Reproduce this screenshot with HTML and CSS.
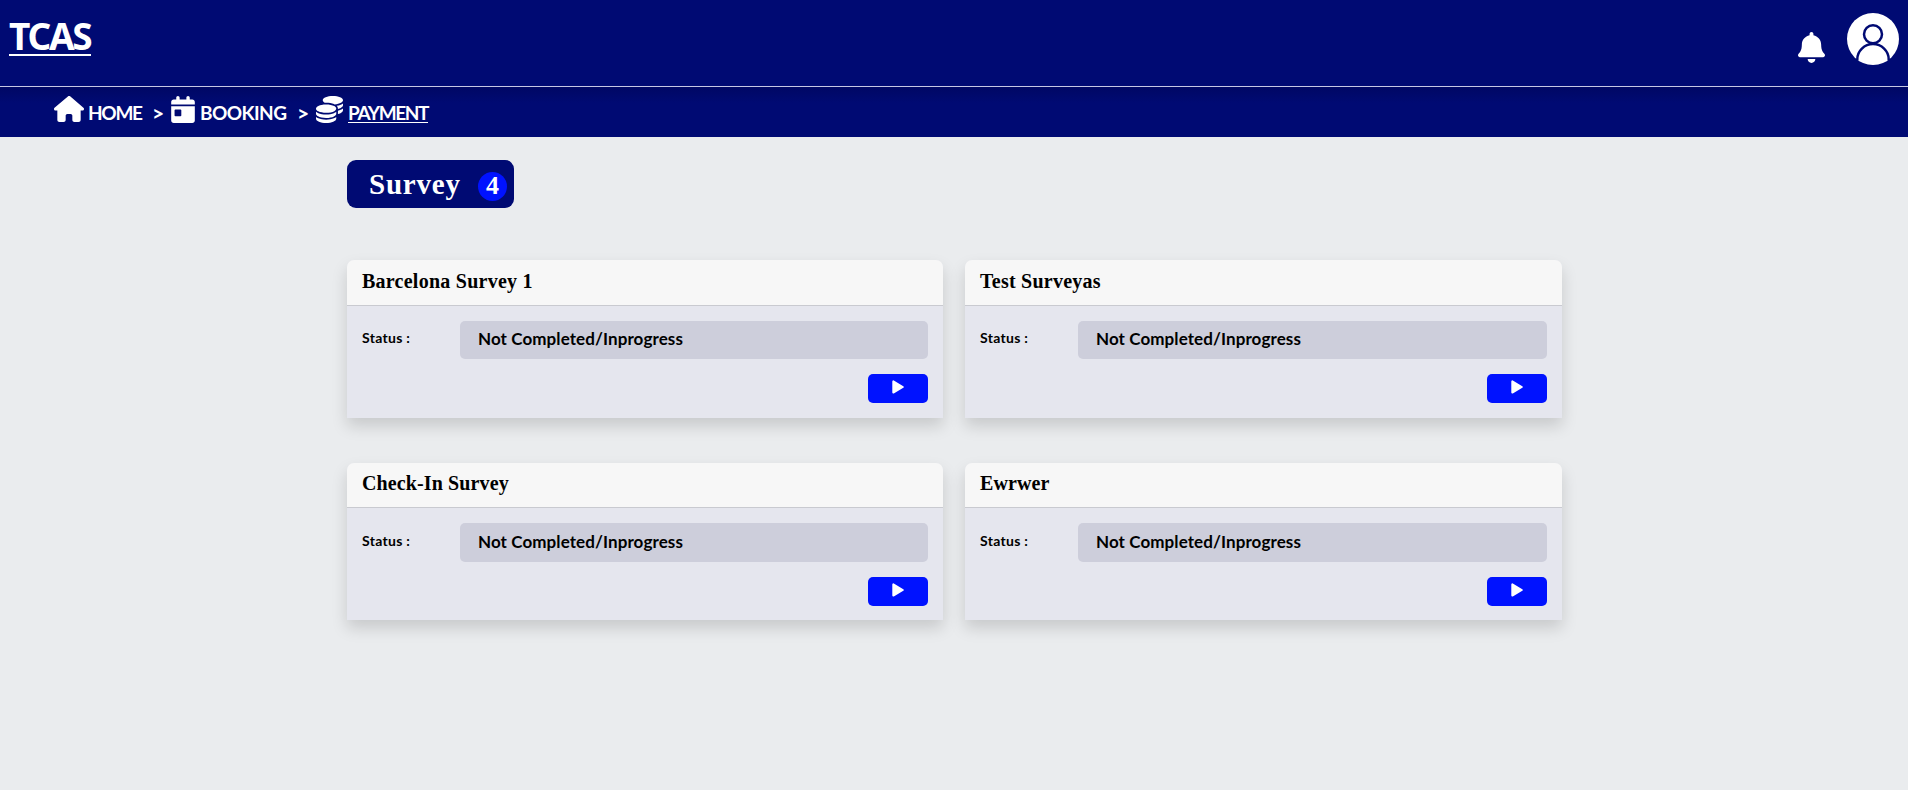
FILE: index.html
```html
<!DOCTYPE html>
<html lang="en">
<head>
<meta charset="utf-8">
<title>TCAS Survey</title>
<link rel="stylesheet" href="styles.css">
</head>
<body>
<svg width="0" height="0" class="defs"><defs>
<symbol id="play" viewBox="0 0 12 14"><path d="M1.3 1.4v11.2L10.8 7z" fill="#fff" stroke="#fff" stroke-width="2" stroke-linejoin="round"/></symbol>
</defs></svg>
<header class="top">
  <a class="logo">TCAS</a>
  <div class="tools">
    <svg class="bell" viewBox="0 0 448 512"><path d="M224 512c35.32 0 63.97-28.65 63.97-64H160.03c0 35.35 28.65 64 63.97 64zm215.39-149.71c-19.32-20.76-55.47-51.99-55.47-154.29 0-77.7-54.48-139.9-127.94-155.16V32c0-17.67-14.32-32-31.98-32s-31.98 14.33-31.98 32v20.84C118.56 68.1 64.08 130.3 64.08 208c0 102.3-36.15 133.53-55.47 154.29-6 6.45-8.66 14.16-8.61 21.71.11 16.4 12.98 32 32.1 32h383.8c19.12 0 32-15.6 32.1-32 .05-7.55-2.61-15.27-8.61-21.71z"/></svg>
    <svg class="avatar" viewBox="0 0 52 52"><circle cx="26" cy="26" r="26" fill="#fff"/><g fill="none" stroke="#000a73" stroke-width="2.5"><circle cx="26" cy="21.3" r="9"/><path d="M10.3 47.5V46.3a15.7 15.2 0 0 1 31.4 0V47.5"/></g></svg>
  </div>
</header>
<nav class="crumbs">
  <svg class="house" viewBox="0 0 576 512" preserveAspectRatio="none"><path d="M575.8 255.5c0 18-15 32.1-32 32.1h-32l.7 160.2c0 2.7-.2 5.4-.5 8.1V472c0 22.1-17.9 40-40 40H456c-1.1 0-2.2 0-3.3-.1c-1.4 .1-2.8 .1-4.2 .1H416 392c-22.1 0-40-17.9-40-40V448 384c0-17.7-14.3-32-32-32H256c-17.7 0-32 14.3-32 32v64 24c0 22.1-17.9 40-40 40H160 128.1c-1.5 0-3-.1-4.5-.2c-1.2 .1-2.4 .2-3.6 .2H104c-22.1 0-40-17.9-40-40V360c0-.9 0-1.9 .1-2.8V287.6H32c-18 0-32-14-32-32.1c0-9 3-17 10-24L266.4 8c7-7 15-8 22-8s15 2 21 7L564.8 231.5c8 7 12 15 11 24z"/></svg>
  <a class="c-home">HOME</a><span class="sep">&gt;</span>
  <svg class="cal" viewBox="0 0 448 512"><path d="M128 0c17.7 0 32 14.3 32 32V64H288V32c0-17.7 14.3-32 32-32s32 14.3 32 32V64h48c26.5 0 48 21.5 48 48v48H0V112C0 85.5 21.5 64 48 64H96V32c0-17.7 14.3-32 32-32zM0 192H448V464c0 26.5-21.5 48-48 48H48c-26.5 0-48-21.5-48-48V192zm80 64c-8.8 0-16 7.2-16 16v96c0 8.8 7.2 16 16 16h96c8.8 0 16-7.2 16-16V272c0-8.8-7.2-16-16-16H80z"/></svg>
  <a class="c-book">BOOKING</a><span class="sep">&gt;</span>
  <svg class="coins" viewBox="0 0 512 512"><path d="M512 80c0 18-14.3 34.6-38.4 48c-29.1 16.1-72.5 27.5-122.3 30.9c-3.7-1.8-7.4-3.5-11.3-5C300.6 137.4 248.2 128 192 128c-8.3 0-16.4 .2-24.5 .6l-1.1-.6C142.3 114.6 128 98 128 80c0-44.2 86-80 192-80S512 35.8 512 80zM160.7 161.1c10.2-.7 20.7-1.1 31.3-1.1c62.2 0 117.4 12.3 152.5 31.4C369.3 204.9 384 221.7 384 240c0 4-.7 7.9-2.1 11.7c-4.6 13.2-17 25.3-35 35.5c-.4 .2-.9 .5-1.3 .7c-35 19.4-90.8 32-153.6 32c-59.6 0-112.9-11.3-148.2-29.1c-1.9-.9-3.7-1.9-5.5-2.9C14.3 274.6 0 258 0 240c0-34.8 53.4-64.5 128-75.4c10.5-1.5 21.4-2.7 32.7-3.5zM416 240c0-21.9-10.6-39.9-24.1-53.4c28.3-4.4 54.2-11.4 76.2-20.5c16.3-6.8 31.5-15.2 43.9-25.5V176c0 19.3-16.5 37.1-43.8 50.9c-14.6 7.4-32.4 13.7-52.4 18.5c.1-1.8 .2-3.5 .2-5.3zm-32 96c0 18-14.3 34.6-38.4 48c-1.8 1-3.6 1.9-5.5 2.9C304.9 404.7 251.6 416 192 416c-62.8 0-118.6-12.6-153.6-32C14.3 370.6 0 354 0 336V300.6c12.5 10.3 27.6 18.7 43.9 25.5C83.4 342.6 135.8 352 192 352s108.6-9.4 148.1-25.9c7.8-3.2 15.3-6.9 22.4-10.9c6.1-3.4 11.8-7.2 17.2-11.2c1.5-1.1 2.9-2.3 4.3-3.4V336zm32 0V278.1c19-4.2 36.5-9.5 52.1-16c16.3-6.8 31.5-15.2 43.9-25.5V272c0 10.5-5 21-14.9 30.9c-16.3 16.3-45 29.7-81.3 38.4c.1-1.7 .2-3.5 .2-5.3zM192 448c56.2 0 108.6-9.4 148.1-25.9c16.3-6.8 31.5-15.2 43.9-25.5V432c0 44.2-86 80-192 80S0 476.2 0 432V396.6c12.5 10.3 27.6 18.7 43.9 25.5C83.4 438.6 135.8 448 192 448z"/></svg>
  <a class="c-pay">PAYMENT</a>
</nav>
<main class="content">
  <h1 class="pill"><span class="pill-text">Survey</span><span class="count">4</span></h1>
  <div class="grid">
    <section class="card"><h2 class="title">Barcelona Survey 1</h2><div class="body"><div class="row"><span class="label">Status :</span><span class="value">Not Completed/Inprogress</span></div><button class="go"><svg><use href="#play"/></svg></button></div></section>
    <section class="card"><h2 class="title">Test Surveyas</h2><div class="body"><div class="row"><span class="label">Status :</span><span class="value">Not Completed/Inprogress</span></div><button class="go"><svg><use href="#play"/></svg></button></div></section>
    <section class="card"><h2 class="title">Check-In Survey</h2><div class="body"><div class="row"><span class="label">Status :</span><span class="value">Not Completed/Inprogress</span></div><button class="go"><svg><use href="#play"/></svg></button></div></section>
    <section class="card"><h2 class="title">Ewrwer</h2><div class="body"><div class="row"><span class="label">Status :</span><span class="value">Not Completed/Inprogress</span></div><button class="go"><svg><use href="#play"/></svg></button></div></section>
  </div>
</main>
</body>
</html>
```
FILE: styles.css
```css
* { box-sizing: border-box; }
html, body { height: 100%; }
body { margin: 0; background: #eaecee; overflow: hidden; font-family: Lato, sans-serif; color: #000; }
.defs { display: block; }
svg { flex: none; display: block; }
.top { height: 87px; background: #000a73; border-bottom: 1px solid #c5c7e3; display: flex; justify-content: space-between; align-items: flex-start; padding: 13px 9px 0 9px; }
.logo { font: 700 37px/45px "Noto Sans", sans-serif; letter-spacing: -2.2px; color: #fff; width: 82px; height: 43px; border-bottom: 2px solid #fff; }
.tools { display: flex; }
.bell { width: 27px; height: 31px; margin: 19px 22px 0 0; fill: #fff; }
.avatar { width: 52px; height: 52px; }
.crumbs { height: 50px; background: linear-gradient(#000764, #000a73 16px); display: flex; align-items: flex-start; padding: 9px 0 0 54px; fill: #fff; color: #fff; font-weight: 700; font-size: 19px; line-height: 33px; white-space: nowrap; }
.house { width: 30px; height: 26px; }
.cal { width: 24px; height: 27px; }
.coins { width: 27px; height: 27px; }
.c-home { margin-left: 4px; width: 64px; letter-spacing: -1.3px; }
.sep { width: 19px; font-size: 21px; }
.c-book { margin-left: 5px; width: 97px; letter-spacing: -.55px; }
.c-pay { margin-left: 5px; letter-spacing: -1.4px; text-decoration: underline; text-underline-offset: 2px; text-decoration-thickness: 1px; }
.content { width: 1215px; margin-left: 347px; padding-top: 23px; }
.pill { width: 167px; height: 48px; margin: 0; border-radius: 9px; background: #000a73; display: flex; align-items: center; padding-left: 22px; color: #fff; font: 700 29px/48px "Liberation Serif", serif; }
.pill-text { width: 109px; letter-spacing: .8px; }
.count { width: 29px; height: 29px; margin-top: 4px; border-radius: 50%; background: #0012ff; text-align: center; line-height: 27px; font-size: 26px; }
.grid { display: grid; grid-template-columns: 596px 597px; gap: 45px 22px; margin-top: 52px; }
.card { height: 158px; background: #e5e6ee; border-radius: 7px 7px 0 0; box-shadow: 0 8px 16px rgba(0,0,0,.15); }
.card:nth-child(n+3) { height: 157px; }
.title { height: 46px; margin: 0; padding-left: 15px; background: #f7f7f7; border-bottom: 1px solid #c9cad0; border-radius: 7px 7px 0 0; font: 700 20px/43px "Liberation Serif", serif; letter-spacing: .25px; }
.card:nth-child(n+3) .title { height: 45px; line-height: 41px; letter-spacing: .12px; }
.body { padding: 15px 15px 0; }
.row { display: flex; }
.label { width: 98px; font-weight: 700; font-size: 14px; line-height: 34px; letter-spacing: .3px; }
.value { flex: 1; height: 38px; border-radius: 5px; background: #cdcedb; padding-left: 18px; font-weight: 700; font-size: 17px; line-height: 36px; letter-spacing: .09px; }
.card:nth-child(n+3) .label { line-height: 36px; }
.card:nth-child(n+3) .value { height: 39px; line-height: 37px; }
.go { display: flex; justify-content: center; width: 60px; height: 29px; margin: 15px 0 0 auto; padding: 6px 0 0; border: 0; border-radius: 5px; background: #0012ff; }
.go svg { width: 12px; height: 14px; }
```
